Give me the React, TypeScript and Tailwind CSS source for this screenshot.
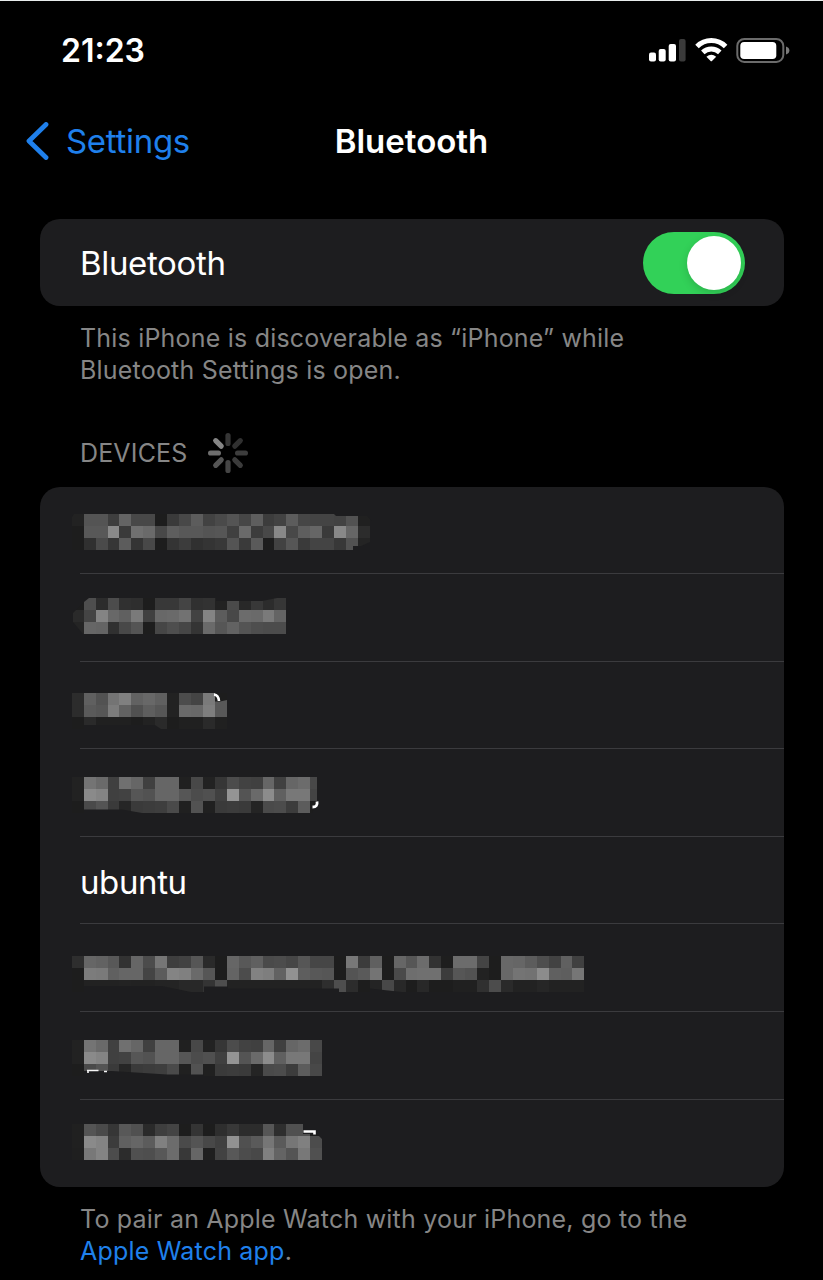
import React from "react";

type Mosaic = {
  pad: string;
  rows: string[];
  mask?: string;
  marks?: React.ReactNode;
};

type Device = { id: number; name?: string; mosaic?: Mosaic };

const CELL = 11.92;

const devices: Device[] = [
  {
    id: 1,
    mosaic: {
      pad: "pt-[27px]",
      rows: [
        "22 54 54 3e 64 48 48 1d 3a 48 5c 42 4a 54 46 5e 3c 42 5c 46 44 44 42 52 20",
        "1d 58 58 8a 3a 70 6a 48 5e 58 58 54 56 40 6a 3c 48 88 48 5e 66 3a 88 66 2c",
        "1d 30 4a 36 5c 34 48 1d 34 3c 30 34 38 54 3a 5a 1d 42 56 3a 44 44 38 52 24",
      ],
      mask: "M262 0H300V7L295 2H264Z M281 36V32H289L298 28V36Z M0 0H2L0 3Z",
    },
  },
  {
    id: 2,
    mosaic: {
      pad: "pt-[24px]",
      rows: [
        "1d 4e 2c 4c 30 2e 1d 38 38 44 30 32 22 4a 28 38 2c 36",
        "2a 44 84 68 60 7a 40 68 6a 72 42 84 5c 48 6c 6a 7a 64",
        "24 66 64 30 48 54 1d 46 4e 46 34 6a 56 62 54 4e 4c 4c",
      ],
      mask: "M0 0H17L12 4L1 15V24L11 36H0Z M144 0H205L190 3H144Z",
    },
  },
  {
    id: 3,
    mosaic: {
      pad: "pt-[31px]",
      rows: [
        "2c 60 52 74 80 62 68 60 22 4c 44 7a 1d",
        "2c 5a 56 7c 62 50 5e 56 22 6a 68 7e 58",
        "1d 2a 20 20 20 1d 22 2a 1d 20 20 2a 20",
      ],
      mask: "M12 32H83L89 36H12Z",
      marks: (
        <>
          <path d="M143 8.5H148L155 7V13H143Z" fill="#585858" />
          <path d="M142 1.5Q146.5 2 147 8" fill="none" stroke="#fff" strokeWidth="2.6" />
        </>
      ),
    },
  },
  {
    id: 4,
    mosaic: {
      pad: "pt-[28px]",
      rows: [
        "22 74 6a 40 70 66 40 66 66 20 48 22 36 4c 42 40 66 40 66 6c 48",
        "22 8a 84 40 42 56 52 66 66 56 4c 50 40 94 54 6a 8c 60 78 78 44",
        "1d 4a 54 3a 26 3a 3c 3e 4a 20 52 20 3a 3c 3a 24 4a 4c 3c 5c 1d",
      ],
      mask: "M12 32.5H50L70 36H12Z M245 0H251V36H240L245 24Z",
      marks: <path d="M245 24.5Q246 30 240.5 30" fill="none" stroke="#fff" strokeWidth="2.8" />,
    },
  },
  { id: 5, name: "ubuntu" },
  {
    id: 6,
    mosaic: {
      pad: "pt-[32px]",
      rows: [
        "2e 66 62 58 32 66 4c 76 3e 42 56 2a 1d 66 58 60 4a 4c 46 56 46 46 1d 78 3c 60 1d 66 56 6c 32 1e 6c 6c 44 1d 68 66 5c 4e 42 60 40",
        "1d 7c 7a 60 66 66 44 5c 84 80 6a 56 1d 64 4c 82 7e 62 92 5e 58 56 1d 54 5a 74 1d 4a 6e 70 70 3c 56 52 22 1d 68 74 72 8c 60 5e 76",
        "1d 22 22 22 23 22 22 24 24 28 28 34 4e 22 22 22 22 22 22 22 22 2e 4e 2c 1d 24 48 28 1d 28 1d 1d 20 20 30 4c 2a 22 22 26 22 22 22",
      ],
      mask: "M12 30H90L119 36H12Z M132 30.5H156V36H132Z M156 32.5H267V36H156Z M298 32.5L330 36H298Z",
    },
  },
  {
    id: 7,
    mosaic: {
      pad: "pt-[28px]",
      rows: [
        "22 74 6a 40 70 66 40 66 66 20 48 22 36 4c 42 40 66 40 66 6c 48",
        "22 8a 84 40 42 56 52 66 66 56 4c 50 40 94 54 6a 8c 60 78 78 44",
        "1d 4a 54 3a 26 3a 3c 3e 4a 20 52 20 3a 3c 3a 24 4a 4c 3c 5c 48",
      ],
      mask: "M12 31H40L95 34.5H132V36H12Z",
      marks: (
        <path d="M15 30.5H26.5 M32 31.5H35 M16 30V33" fill="none" stroke="#f5f5f5" strokeWidth="1.6" />
      ),
    },
  },
  {
    id: 8,
    mosaic: {
      pad: "pt-[24px]",
      rows: [
        "20 54 4a 36 58 50 2a 3e 44 1d 34 1d 2e 38 2c 2c 56 2e 50 50 1d",
        "20 8a 84 3c 60 66 5c 80 6c 4a 54 48 40 92 50 5a 76 5a 76 80 4c",
        "1f 78 84 4c 2c 50 4e 58 6c 38 66 1f 42 58 4c 48 80 64 54 78 50",
      ],
      mask: "M231 0H251V16L245 10H231Z",
      marks: <path d="M231.5 7.5H242.5V10.5" fill="none" stroke="#fff" strokeWidth="2.6" />,
    },
  },
];

function PixelLabel({ rows, mask, marks }: Mosaic) {
  return (
    <svg width="530" height="38" viewBox="0 0 530 38" className="-ml-2 block" aria-hidden="true">
      <g shapeRendering="crispEdges">
        {rows.map((row, r) =>
          row.split(" ").map((v, c) => (
            <rect
              key={`${r}-${c}`}
              x={c * CELL - 0.2}
              y={r * CELL}
              width={CELL + 0.1}
              height={CELL + 0.1}
              fill={`#${v}${v}${v}`}
            />
          )),
        )}
      </g>
      {mask && <path d={mask} fill="#1d1d1f" />}
      {marks}
    </svg>
  );
}

function StatusIcons() {
  return (
    <svg width="142" height="28" viewBox="0 0 142 28" aria-hidden="true">
      <rect x="0" y="15.5" width="7" height="9" rx="2" fill="#fff" />
      <rect x="9.7" y="12" width="7" height="12.5" rx="2" fill="#fff" />
      <rect x="19.7" y="7" width="7.3" height="17.5" rx="2" fill="#fff" />
      <rect x="30" y="2" width="6.6" height="22.5" rx="2" fill="#3a3a3a" />
      <g fill="none" stroke="#fff" strokeWidth="5">
        <path d="M48 9.4A20.3 20.3 0 0 1 76.6 9.4" />
        <path d="M53.8 15.4A12.3 12.3 0 0 1 70.8 15.4" />
      </g>
      <path d="M57.4 19.7Q62.3 15.8 67.2 19.7L63.2 23.8Q62.3 24.8 61.4 23.8Z" fill="#fff" />
      <rect x="88.3" y="1.9" width="46" height="23" rx="7" fill="none" stroke="#6b6b6b" strokeWidth="2" />
      <rect x="91.3" y="5" width="36" height="17" rx="3.8" fill="#fff" />
      <path d="M137 9.5Q140.4 10.7 140.4 13.5T137 17.5Z" fill="#7b7b7b" />
    </svg>
  );
}

const spokes = [
  { angle: 0, color: "#363636" },
  { angle: 45, color: "#303030" },
  { angle: 90, color: "#3d3d3d" },
  { angle: 135, color: "#3b3b3b" },
  { angle: 180, color: "#454545" },
  { angle: 225, color: "#555555" },
  { angle: 270, color: "#6e6e6e" },
  { angle: 315, color: "#858585" },
];

function Spinner() {
  return (
    <svg width="40" height="40" viewBox="-20 -20 40 40" aria-hidden="true">
      {spokes.map((s) => (
        <rect
          key={s.angle}
          x="-2.6"
          y="-20"
          width="5.2"
          height="13"
          rx="2.6"
          fill={s.color}
          transform={`rotate(${s.angle})`}
        />
      ))}
    </svg>
  );
}

export default function App() {
  return (
    <main className="flex h-[1280px] w-[823px] flex-col overflow-hidden border-t border-[#e8ecec] bg-black font-['Inter',sans-serif] text-white">
      <header className="flex h-[100px] items-center justify-between pr-8 pl-[61px]">
        <time className="text-[32px] leading-10 font-semibold">21:23</time>
        <StatusIcons />
      </header>

      <nav className="grid h-20 grid-cols-[1fr_auto_1fr] items-center px-[25px]">
        <a className="flex items-center gap-[17px] text-[#1f80ec]">
          <svg width="24" height="38" viewBox="0 0 24 38" aria-hidden="true">
            <path d="M21 2.5L4 19L21 35.5" fill="none" stroke="currentColor" strokeWidth="4.8" strokeLinecap="round" strokeLinejoin="round" />
          </svg>
          <span className="text-[33px] leading-10 tracking-[-0.3px]">Settings</span>
        </a>
        <h1 className="text-[33px] leading-10 font-semibold">Bluetooth</h1>
      </nav>

      <section className="mt-[38px] mr-[39px] ml-10 flex h-[87px] items-center justify-between rounded-[20px] bg-[#1d1d1f] pr-[39px] pl-10">
        <span className="text-[33px] leading-10 tracking-[-0.35px]">Bluetooth</span>
        <span className="flex h-[62px] w-[102px] items-center justify-end rounded-full bg-[#32d158] pr-1">
          <span className="size-[54px] rounded-full bg-white shadow-[0_3px_8px_rgba(0,0,0,0.15)]" />
        </span>
      </section>
      <p className="mt-4 ml-20 text-[25px] leading-8 tracking-[0.2px] text-[#868686]">
        This iPhone is discoverable as “iPhone” while
        <br />
        Bluetooth Settings is open.
      </p>

      <div className="mt-[47px] ml-20 flex h-10 items-center gap-[21px]">
        <h2 className="text-[25px] leading-8 tracking-[0.15px] text-[#868686]">DEVICES</h2>
        <Spinner />
      </div>
      <ul className="mt-[14px] mr-[39px] ml-10 h-[700px] shrink-0 overflow-hidden rounded-[20px] bg-[#1d1d1f] pl-10">
        {devices.map((d) => (
          <li key={d.id} className="h-[87.6px] border-b border-[#3b3b3e] first:h-[87px] last:border-b-0">
            {d.mosaic ? (
              <div className={d.mosaic.pad}>
                <PixelLabel {...d.mosaic} />
              </div>
            ) : (
              <span className="block pt-[25px] text-[33px] leading-10 tracking-[-0.4px]">{d.name}</span>
            )}
          </li>
        ))}
      </ul>
      <p className="mt-4 ml-20 text-[25px] leading-8 tracking-[0.2px] text-[#868686]">
        To pair an Apple Watch with your iPhone, go to the
        <br />
        <a className="text-[#1f80ec]">Apple Watch app</a>.
      </p>
    </main>
  );
}
